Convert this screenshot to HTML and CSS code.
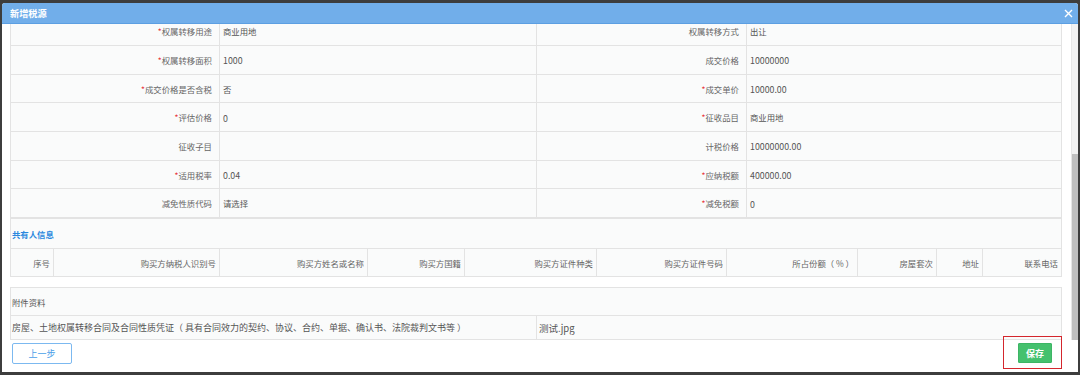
FILE: index.html
```html
<!DOCTYPE html>
<html lang="zh-CN">
<head>
    <meta charset="UTF-8">
    <title>新增税源</title>
    <link rel="stylesheet" href="styles.css">
</head>
<body>
    <div class="dialog">
        <!-- 标题栏 -->
        <div class="dialog-title">
            <span>新增税源</span>
            <svg class="close" width="9" height="9" viewBox="0 0 9 9"><path d="M1 1L8 8M8 1L1 8" stroke="#fff" stroke-width="1.4"/></svg>
        </div>

        <div class="dialog-body">
            <div class="scroll">
                <div class="content">
                    <div class="panel">
                        <div class="form-grid">
                            <div class="label"><i>*</i>权属转移用途</div><div class="value">商业用地</div>
                            <div class="label">权属转移方式</div><div class="value">出让</div>

                            <div class="label"><i>*</i>权属转移面积</div><div class="value num">1000</div>
                            <div class="label">成交价格</div><div class="value num">10000000</div>

                            <div class="label"><i>*</i>成交价格是否含税</div><div class="value">否</div>
                            <div class="label"><i>*</i>成交单价</div><div class="value num">10000.00</div>

                            <div class="label"><i>*</i>评估价格</div><div class="value num">0</div>
                            <div class="label"><i>*</i>征收品目</div><div class="value">商业用地</div>

                            <div class="label">征收子目</div><div class="value"></div>
                            <div class="label">计税价格</div><div class="value num">10000000.00</div>

                            <div class="label"><i>*</i>适用税率</div><div class="value num">0.04</div>
                            <div class="label"><i>*</i>应纳税额</div><div class="value num">400000.00</div>

                            <div class="label">减免性质代码</div><div class="value">请选择</div>
                            <div class="label"><i>*</i>减免税额</div><div class="value num">0</div>
                        </div>

                        <div class="section-title">共有人信息</div>
                        <div class="owner-head">
                            <div>序号</div>
                            <div>购买方纳税人识别号</div>
                            <div>购买方姓名或名称</div>
                            <div>购买方国籍</div>
                            <div>购买方证件种类</div>
                            <div>购买方证件号码</div>
                            <div>所占份额（ % ）</div>
                            <div>房屋套次</div>
                            <div>地址</div>
                            <div>联系电话</div>
                        </div>
                    </div>

                    <!-- 附件资料 -->
                    <div class="attach">
                        <div class="attach-title">附件资料</div>
                        <div class="attach-row">
                            <div>房屋、土地权属转移合同及合同性质凭证（ 具有合同效力的契约、协议、合约、单据、确认书、法院裁判文书等 ）</div>
                            <div>测试.jpg</div>
                        </div>
                    </div>
                </div>
                <div class="scrollbar"><div class="thumb"></div></div>
            </div>

            <div class="footer">
                <button class="btn-prev">上一步</button>
                <button class="btn-save">保存</button>
                <div class="mark"></div>
            </div>
        </div>
    </div>
</body>
</html>
```

FILE: styles.css
```css
body {
    margin: 0;
    background: #3d3d3d;
    font-family: "Noto Sans CJK SC", "Liberation Sans", sans-serif;
    font-size: 8.4px;
    color: #555;
}

.dialog {
    margin: 3px 2px;
    height: 369px;
    background: #fff;
    display: flex;
    flex-direction: column;
    border-radius: 3px 3px 0 0;
    overflow: hidden;
}

/* 标题栏 */
.dialog-title {
    height: 20px;
    flex: none;
    background: #71aeea;
    border-bottom: 1px solid #5c9fe2;
    display: flex;
    align-items: center;
    justify-content: space-between;
    padding: 0 5px 0 8px;
    color: #fff;
    font-weight: bold;
    font-size: 9.2px;
}
.close {
    display: block;
}

.dialog-body {
    flex: 1;
    display: flex;
    flex-direction: column;
    min-height: 0;
}

.scroll {
    height: 316px;
    flex: none;
    display: flex;
    overflow: hidden;
}
.content {
    flex: 1;
    padding: 0 9px 0 8px;
    overflow: hidden;
}
.scrollbar {
    width: 6px;
    background: #f1f1f1;
    border-left: 1px solid #e6e6e6;
    display: flex;
    flex-direction: column;
    justify-content: flex-end;
}
.thumb {
    height: 186px;
    background: #bfbfbf;
}

/* 表单 */
.panel {
    margin-top: -6.7px;
    border: 1px solid #e3e3e3;
    border-top: none;
    background: #fafbfb;
}
.form-grid {
    display: grid;
    grid-template-columns: 209px 317px 210px 1fr;
    grid-auto-rows: 28.7px;
}
.form-grid > div {
    border-bottom: 1px solid #e3e3e3;
    display: flex;
    align-items: center;
}
.form-grid > div:not(:nth-child(4n)) {
    border-right: 1px solid #e3e3e3;
}
.label {
    justify-content: flex-end;
    padding-right: 7px;
    color: #666;
}
.label i {
    font-style: normal;
    color: #e8343c;
}
.value {
    padding-left: 3px;
}
.num {
    font-size: 8.8px;
    padding-top: 2px;
}

.section-title {
    height: 29px;
    border-top: 1px solid #e3e3e3;
    display: flex;
    align-items: center;
    padding-left: 1px;
    color: #2b88de;
    font-weight: bold;
}
.owner-head {
    display: grid;
    grid-template-columns: 43px 166px 148px 97px 132px 130px 131px 79px 46px 1fr;
    height: 27px;
    border-top: 1px solid #e3e3e3;
}
.owner-head > div {
    display: flex;
    align-items: center;
    justify-content: flex-end;
    padding-right: 3px;
    border-right: 1px solid #e3e3e3;
    color: #666;
}
.owner-head > div:last-child {
    border-right: none;
}

/* 附件资料 */
.attach {
    margin-top: 10px;
    border: 1px solid #e3e3e3;
    background: #fafbfb;
}
.attach-title {
    height: 27px;
    border-bottom: 1px solid #e3e3e3;
    display: flex;
    align-items: center;
    padding-left: 1px;
}
.attach-row {
    display: grid;
    grid-template-columns: 526px 1fr;
    height: 23px;
    border-bottom: 1px solid #e3e3e3;
}
.attach-row > div {
    display: flex;
    align-items: center;
    padding-left: 1px;
    font-size: 9px;
    white-space: nowrap;
}
.attach-row > div:first-child {
    border-right: 1px solid #e3e3e3;
}
.attach-row > div:last-child {
    padding-left: 2px;
    font-size: 9.5px;
}

/* 底部按钮 */
.footer {
    position: relative;
    flex: 1;
    display: flex;
    align-items: flex-start;
    justify-content: space-between;
    padding: 3px 26px 0 10px;
}
.btn-prev {
    width: 60px;
    height: 21px;
    background: #fff;
    border: 1px solid #7cb9f0;
    border-radius: 2px;
    color: #4a9ee8;
    font-family: inherit;
    font-size: 9px;
    padding: 0;
}
.btn-save {
    width: 34px;
    height: 20px;
    background: #45c16e;
    border: 1px solid #3db565;
    border-radius: 1px;
    color: #fff;
    font-family: inherit;
    font-size: 9px;
    font-weight: bold;
    padding: 0;
}
.mark {
    position: absolute;
    right: 16px;
    top: -4px;
    width: 57px;
    height: 31px;
    border: 1.5px solid #d4262d;
}
```
